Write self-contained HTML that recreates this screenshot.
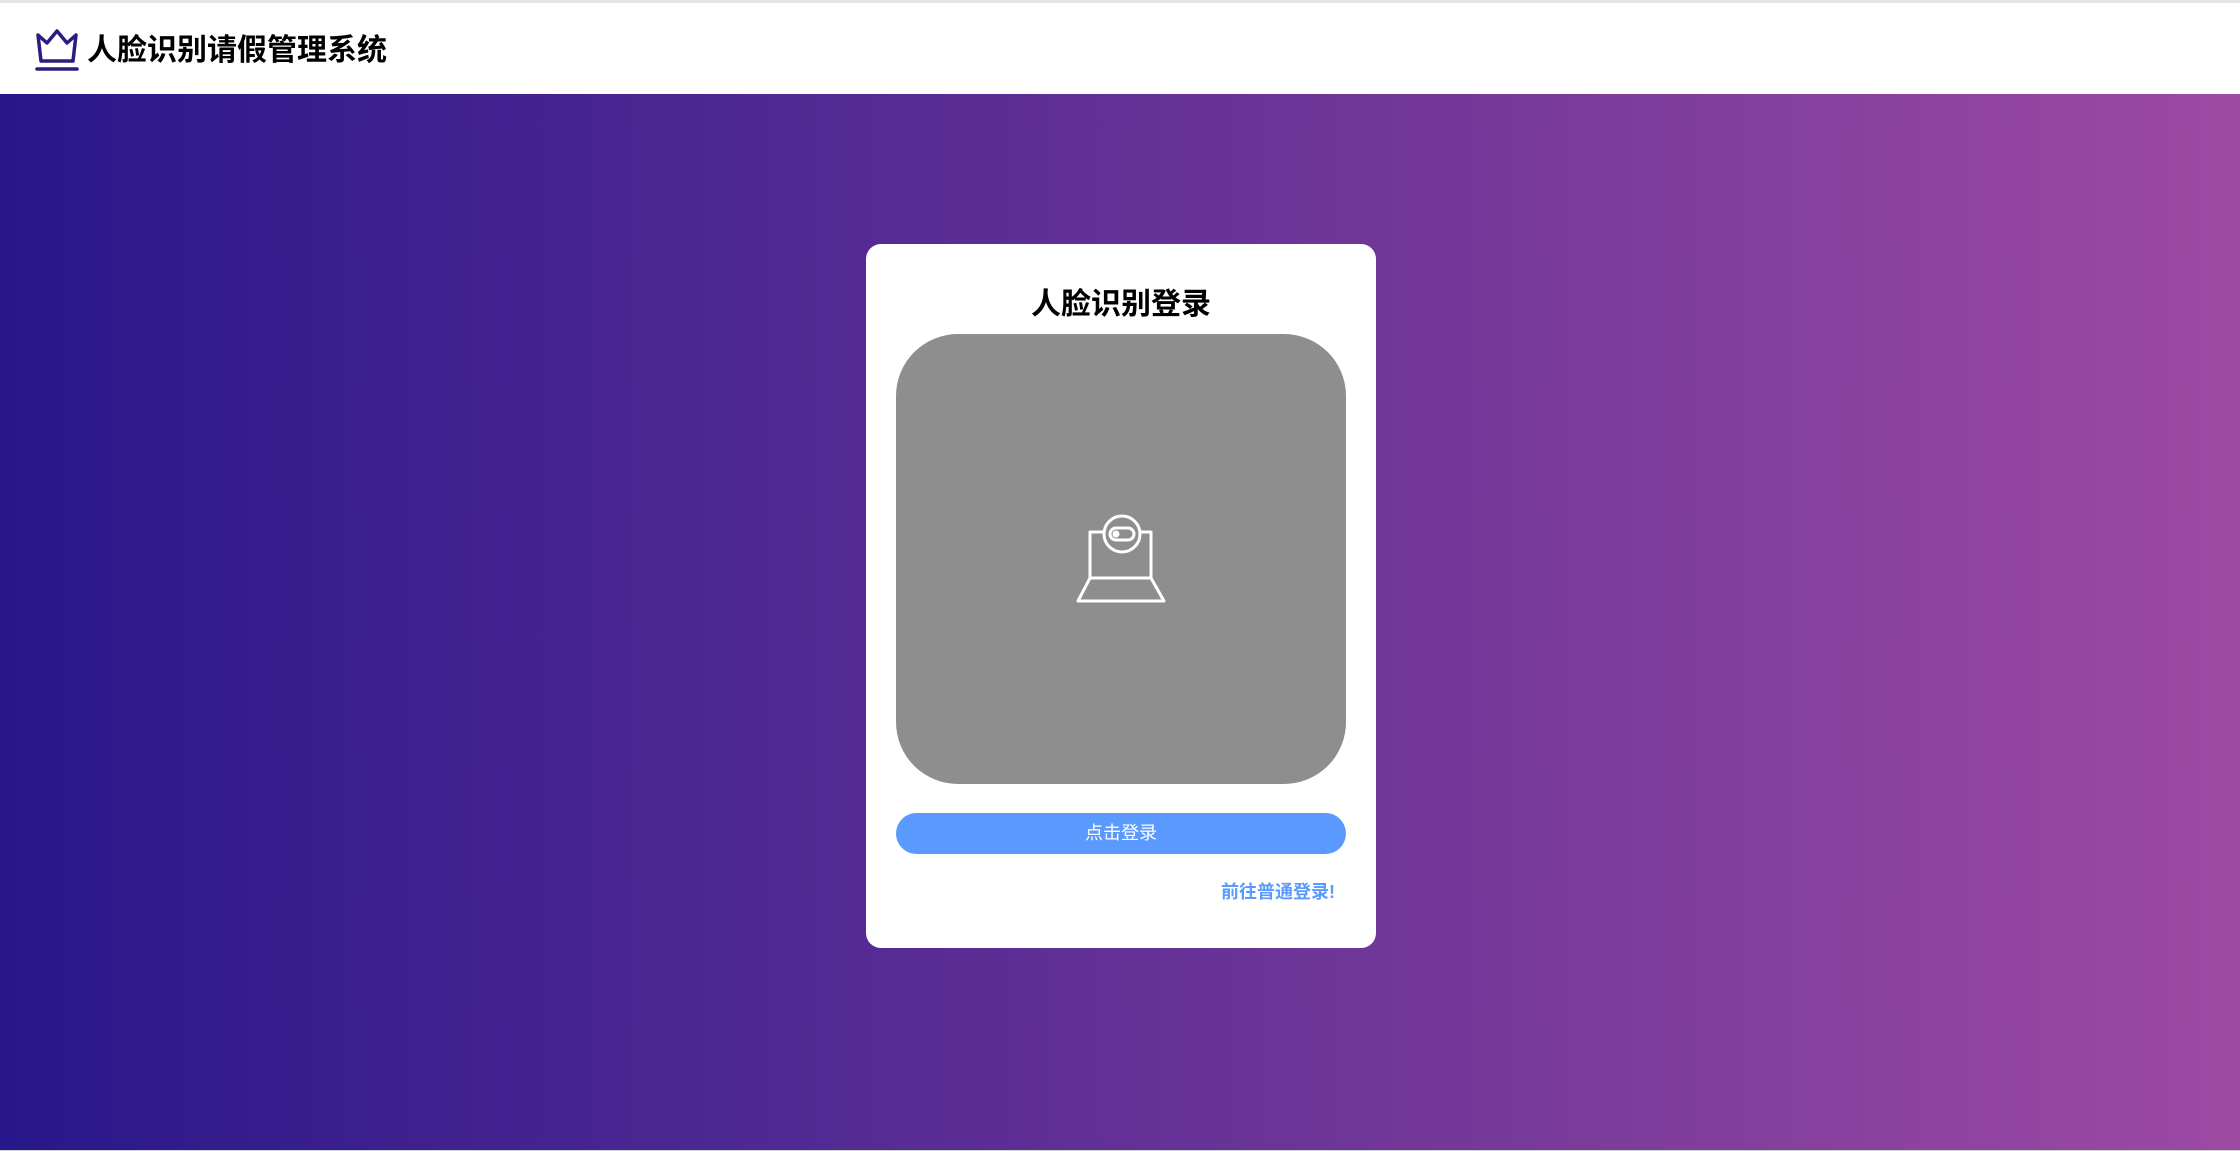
<!DOCTYPE html>
<html><head><meta charset="utf-8"><style>
html,body{margin:0;padding:0;width:2240px;height:1151px;overflow:hidden;background:#fff;font-family:"Liberation Sans","Noto Sans CJK SC",sans-serif;}
.top{position:absolute;left:0;top:0;width:2240px;height:3px;background:#e4e4e4;}
.hdr{position:absolute;left:0;top:3px;width:2240px;height:91px;background:#fff;}
.hdr .t{position:absolute;left:87px;top:27px;font-size:30px;font-weight:bold;color:#000;line-height:42px;}
.bg{position:absolute;left:0;top:94px;width:2240px;height:1056px;background:linear-gradient(to right,#28178a,#9d4aa2);}
.bl{position:absolute;left:0;top:1150px;width:2240px;height:1px;background:#cfd6d8;}
.card{position:absolute;left:866px;top:244px;width:510px;height:704px;background:#fff;border-radius:15px;}
.ct{position:absolute;width:510px;top:284px;text-align:center;font-size:30px;font-weight:bold;line-height:42px;color:#000;}
.cam{position:absolute;left:896px;top:334px;width:450px;height:450px;background:#8e8e8f;border-radius:62px;}
.btn{position:absolute;left:896px;top:813px;width:450px;height:41px;border-radius:21px;background:#5a9afe;color:#fff;font-size:18px;line-height:41px;text-align:center;}
.lnk{position:absolute;right:905px;top:879px;font-size:18px;font-weight:bold;color:#5a9afe;line-height:26px;}
</style></head><body>
<div class="top"></div>
<div class="hdr">
<svg style="position:absolute;left:34px;top:22px" width="46" height="48" viewBox="0 0 46 48">
<path d="M4 10 L13 18 L23 6 L33 18 L42 10 L39 36 L7 36 Z" fill="none" stroke="#2a1d7e" stroke-width="3.5" stroke-linejoin="round"/>
<line x1="3" y1="44" x2="43" y2="44" stroke="#2a1d7e" stroke-width="3.5" stroke-linecap="round"/>
</svg>
<div class="t">人脸识别请假管理系统</div>
</div>
<div class="bg"></div>
<div class="bl"></div>
<div class="card"></div>
<div class="ct" style="left:866px">人脸识别登录</div>
<div class="cam"></div>
<svg style="position:absolute;left:1070px;top:508px" width="100" height="100" viewBox="1070 508 100 100">
<g fill="none" stroke="#fff" stroke-width="3" stroke-linejoin="round" stroke-linecap="round">
<path d="M1104 532 H1090 V578 H1151 V532 H1140"/>
<path d="M1090 578 L1078 601 H1164 L1151 578"/>
<circle cx="1122" cy="534" r="18" fill="#8e8e8f"/>
<rect x="1110" y="528" width="24" height="12" rx="6"/>
</g>
<circle cx="1116" cy="534" r="3.5" fill="#fff"/>
</svg>
<div class="btn">点击登录</div>
<div class="lnk">前往普通登录!</div>
</body></html>
